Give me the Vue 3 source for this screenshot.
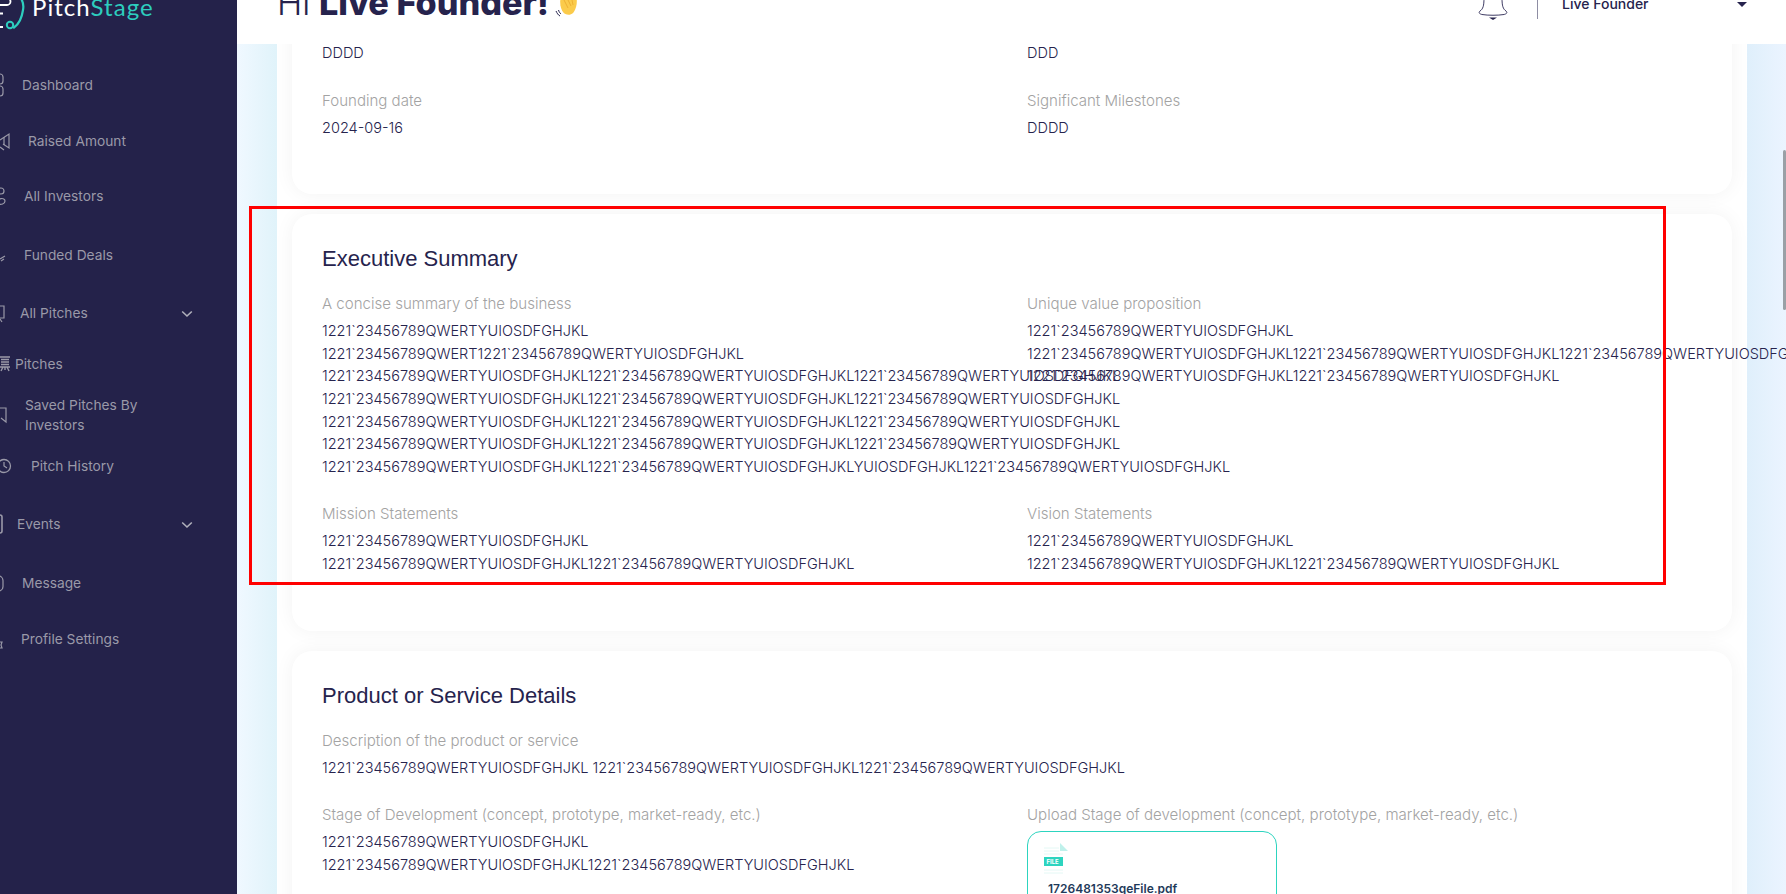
<script setup>
const navItems = [
  { label: 'Dashboard', shift: 0, top: 1, icon: 'dash', iconW: 22 },
  { label: 'Raised Amount', shift: 6, top: 15.5, icon: 'raise', iconW: 28 },
  { label: 'All Investors', shift: 2, top: 15, icon: 'people', iconW: 24 },
  { label: 'Funded Deals', shift: 2, top: 19, icon: 'deal', iconW: 24 },
  { label: 'All Pitches', shift: -2, top: 18, icon: 'board', iconW: 20, caret: true },
  { label: 'Pitches', shift: -7, top: 11, icon: 'pitch', iconW: 15 },
  { label: 'Saved Pitches By Investors', shift: 3, top: 11, icon: 'save', iconW: 25, wide: true },
  { label: 'Pitch History', shift: 9, top: 11, icon: 'clock', iconW: 31 },
  { label: 'Events', shift: -5, top: 18, icon: 'event', iconW: 17, caret: true },
  { label: 'Message', shift: 0, top: 19, icon: 'msg', iconW: 22 },
  { label: 'Profile Settings', shift: -1, top: 16, icon: 'gear', iconW: 21 }
]
const one = '1221`23456789QWERTYUIOSDFGHJKL'
const two = one + one
const three = one + one + one
</script>

<template>
  <div class="page">
    <aside class="side">
      <div class="logo">
        <svg class="logo-mark" width="30" height="32" viewBox="0 0 30 32" fill="none">
          <path d="M20 -3C23 1 24 5 23 10C22 17 19 24 14 27.500" stroke="#2dcdbe" stroke-width="2.200" stroke-linecap="round"/>
          <circle cx="10" cy="25" r="3.200" stroke="#2dcdbe" stroke-width="2"/>
          <path d="M0 5H7a3.500 3.500 0 0 0 0-7H0" stroke="#fff" stroke-width="1.800"/>
          <path d="M0 13.500h3M0 27h3" stroke="#fff" stroke-width="2"/>
        </svg>
        <span class="logo-text"><span class="logo-a">Pitch</span><span class="logo-b">Stage</span></span>
      </div>
      <nav class="nav">
        <div v-for="item in navItems" :key="item.label" class="nav-row" :style="{ marginTop: item.top + 'px' }">
          <div class="nav-icon" :style="{ width: item.iconW + 'px' }">
            <svg width="16" height="24" viewBox="0 0 16 24" fill="none" stroke="#9a99a8" stroke-width="1.200">
              <template v-if="item.icon === 'dash'">
                <rect x="-6" y="1" width="9" height="10" rx="3"/><rect x="-6" y="13" width="9" height="10" rx="3"/>
              </template>
              <template v-else-if="item.icon === 'raise'">
                <path d="M0 11L9 5V19L3 15M0 18L4 21"/><path d="M4 8V16"/>
              </template>
              <template v-else-if="item.icon === 'people'">
                <circle cx="1" cy="7" r="3"/><path d="M-3 19C-3 14 5 13 5 17C5 20 1 21 -2 20"/>
              </template>
              <template v-else-if="item.icon === 'deal'">
                <path d="M0 16L5 13M1 18L4 16"/>
              </template>
              <template v-else-if="item.icon === 'board'">
                <path d="M-3 5H4V17H-3M0 18L2 21"/>
              </template>
              <template v-else-if="item.icon === 'pitch'">
                <path d="M0 5H10M1 7.500H9M1 10H9M1 12.500H9M0 15H10M3 15L1 19M7 15L9 19M5 15V18" stroke-width="1.400"/>
              </template>
              <template v-else-if="item.icon === 'save'">
                <path d="M-2 5H6V19L1 15"/>
              </template>
              <template v-else-if="item.icon === 'clock'">
                <circle cx="4" cy="12" r="6.500" stroke-width="1.300"/><path d="M4 8V12L7 14"/>
              </template>
              <template v-else-if="item.icon === 'event'">
                <rect x="-6" y="3" width="8" height="18" rx="2" stroke-width="1.600"/>
              </template>
              <template v-else-if="item.icon === 'msg'">
                <rect x="-6" y="5" width="9" height="15" rx="4.500"/>
              </template>
              <template v-else>
                <path d="M0 15H2L1 18L2 21H0"/>
              </template>
            </svg>
          </div>
          <span class="nav-label" :class="{ 'nav-wide': item.wide }">{{ item.label }}</span>
          <svg v-if="item.caret" class="chev" width="12" height="8" viewBox="0 0 12 8" fill="none">
            <path d="M1.200 1.500L6 6L10.800 1.500" stroke="#b0b0bb" stroke-width="1.600"/>
          </svg>
        </div>
      </nav>
    </aside>

    <main class="main">
      <header class="top">
        <h1 class="hello">
          <span class="hi">Hi </span><b class="name">Live Founder!</b>
          <svg class="wave" width="22" height="16" viewBox="0 0 22 16">
            <path d="M5 -4L9 -4L20 -4C22 2 20 10 17 13C14 16 9 15 7 12C5 9 3 4 5 -4Z" fill="#fbcb4b"/>
            <path d="M8 0L12 8M12 0L15 6M16 0L17 5" stroke="#eba92f" stroke-width="0.800" fill="none"/>
            <path d="M2.500 10C3 12 4 13 5 14M0 11C1 13 2 15 4 16" stroke="#26234d" stroke-width="1" fill="none"/>
          </svg>
        </h1>
        <div class="top-right">
          <svg class="bell" width="30" height="21" viewBox="0 0 30 21" fill="none">
            <path d="M6 -2C6 6 5 9 2 11C0 13 2 14 4 14.500C10 15.500 20 15.500 26 14.500C28 14 30 13 28 11C25 9 24 6 24 -2" stroke="#3e3b63" stroke-width="1"/>
            <path d="M11 17.500H19L15 20Z" fill="#26234d"/>
          </svg>
          <span class="divider"></span>
          <span class="user">Live Founder</span>
          <span class="caret"></span>
        </div>
      </header>

      <div class="scroller">
        <div class="sheet">
          <section class="card card-first">
            <div class="grid">
              <div class="field"><div class="val">DDDD</div></div>
              <div class="field"><div class="val">DDD</div></div>
              <div class="field">
                <div class="lbl">Founding date</div>
                <div class="val">2024-09-16</div>
              </div>
              <div class="field">
                <div class="lbl">Significant Milestones</div>
                <div class="val">DDDD</div>
              </div>
            </div>
          </section>

          <section class="card">
            <h2 class="title">Executive Summary</h2>
            <div class="grid">
              <div class="field">
                <div class="lbl">A concise summary of the business</div>
                <div class="val">{{ one }}</div>
                <div class="val">1221`23456789QWERT1221`23456789QWERTYUIOSDFGHJKL</div>
                <div class="val">{{ three }}</div>
                <div class="val">{{ three }}</div>
                <div class="val">{{ three }}</div>
                <div class="val">{{ three }}</div>
                <div class="val">1221`23456789QWERTYUIOSDFGHJKL1221`23456789QWERTYUIOSDFGHJKLYUIOSDFGHJKL1221`23456789QWERTYUIOSDFGHJKL</div>
              </div>
              <div class="field">
                <div class="lbl">Unique value proposition</div>
                <div class="val">{{ one }}</div>
                <div class="val">{{ three }}</div>
                <div class="val">{{ two }}</div>
              </div>
              <div class="field">
                <div class="lbl">Mission Statements</div>
                <div class="val">{{ one }}</div>
                <div class="val">{{ two }}</div>
              </div>
              <div class="field">
                <div class="lbl">Vision Statements</div>
                <div class="val">{{ one }}</div>
                <div class="val">{{ two }}</div>
              </div>
            </div>
          </section>

          <section class="card">
            <h2 class="title">Product or Service Details</h2>
            <div class="field">
              <div class="lbl">Description of the product or service</div>
              <div class="val">1221`23456789QWERTYUIOSDFGHJKL 1221`23456789QWERTYUIOSDFGHJKL1221`23456789QWERTYUIOSDFGHJKL</div>
            </div>
            <div class="grid">
              <div class="field">
                <div class="lbl">Stage of Development (concept, prototype, market-ready, etc.)</div>
                <div class="val">{{ one }}</div>
                <div class="val">{{ two }}</div>
              </div>
              <div class="field">
                <div class="lbl">Upload Stage of development (concept, prototype, market-ready, etc.)</div>
                <div class="file">
                  <svg width="26" height="30" viewBox="0 0 26 30">
                    <path d="M16 0L24 8H16Z" fill="#bff1eb"/>
                    <path d="M0 5H15M0 8H15M0 11H19M0 27H19M0 30H19" stroke="#e4f8f5" stroke-width="1"/>
                    <rect y="14" width="19" height="9" fill="#2dd4bf"/>
                    <text x="2.500" y="21" class="file-tag">FILE</text>
                  </svg>
                  <div class="file-name">1726481353qeFile.pdf</div>
                </div>
              </div>
            </div>
          </section>
        </div>
        <span class="scroll-thumb"></span>
      </div>
    </main>
    <div class="red-box"></div>
  </div>
</template>

<style>
html, body { margin: 0; padding: 0; overflow: hidden; }
</style>

<style scoped>
.page {
  position: relative;
  display: flex;
  width: 1786px;
  height: 894px;
  overflow: hidden;
  font-family: Inter, "Liberation Sans", sans-serif;
  color: #26234d;
}
.side {
  width: 237px;
  flex: none;
  background: #24224a;
  overflow: hidden;
}
.logo {
  height: 32px;
  display: flex;
  align-items: flex-start;
  overflow: hidden;
}
.logo-mark { flex: none; margin-right: 2px; overflow: visible; }
.logo-text {
  font-family: Lato, sans-serif;
  font-weight: 400;
  font-size: 24px;
  line-height: 24px;
  letter-spacing: 1.05px;
  margin-top: -5px;
}
.logo-a { color: #fff; }
.logo-b { color: #2dcdbe; }
.nav { display: flex; flex-direction: column; padding-top: 32px; }
.nav-row {
  display: flex;
  align-items: center;
  min-height: 40px;
  position: relative;
  font-size: 13.75px;
  line-height: 20px;
  color: #9a99a8;
}
.nav-icon { flex: none; height: 24px; overflow: hidden; }
.nav-icon svg { display: block; overflow: visible; }
.nav-wide { width: 130px; }
.chev { position: absolute; left: 181px; top: 17px; }
.main {
  flex: 1;
  min-width: 0;
  display: flex;
  flex-direction: column;
}
.top {
  height: 44px;
  flex: none;
  background: #fff;
  display: flex;
  justify-content: space-between;
  align-items: flex-start;
  overflow: hidden;
  padding-left: 40px;
}
.hello {
  margin: -17px 0 0;
  font-size: 34.2px;
  line-height: 40px;
  font-weight: 400;
  white-space: nowrap;
  display: flex;
  align-items: center;
}
.hi { font-weight: 300; white-space: pre; margin-right: -1px; }
.name { font-weight: 800; }
.wave { margin: 17px 0 0 7px; flex: none; align-self: flex-start; overflow: visible; }
.top-right {
  display: flex;
  align-items: flex-start;
  width: 308px;
  flex: none;
  position: relative;
}
.bell { display: block; overflow: visible; }
.divider {
  width: 1px;
  height: 19px;
  background: #8e8da3;
  margin-left: 29px;
}
.user {
  font-size: 14px;
  line-height: 18px;
  font-weight: 500;
  margin: -5px 0 0 24px;
}
.caret {
  position: absolute;
  left: 259px;
  top: 2px;
  border: 5px solid transparent;
  border-top: 5px solid #26234d;
  border-bottom: 0;
}
.scroller {
  flex: 1;
  min-height: 0;
  position: relative;
  overflow: hidden;
  padding: 0 39px 0 40px;
  background:
    linear-gradient(90deg, #f0f8ff 0%, #e0f3fa 100%) left top / 40px 100% no-repeat,
    linear-gradient(90deg, #dfeffb 0%, #ebf4ff 100%) right top / 39px 100% no-repeat;
}
.sheet {
  background: #fff;
  padding: 0 15px;
  height: 100%;
  display: flex;
  flex-direction: column;
  gap: 20px;
}
.card {
  flex: none;
  background: #fff;
  border-radius: 20px;
  box-shadow: 0 0 20px rgba(0, 0, 0, 0.05);
  padding: 31px 30px 30px;
}
.card-first {
  margin-top: -30px;
  border-radius: 0 0 20px 20px;
  padding-top: 28px;
}
.title {
  margin: 0 0 21px;
  font-family: "Liberation Sans", Arial, sans-serif;
  font-size: 22px;
  line-height: 27px;
  font-weight: 400;
  color: #26234d;
}
.grid {
  display: grid;
  grid-template-columns: 705px 1fr;
}
.field { margin-bottom: 25px; min-width: 0; }
.lbl {
  font-size: 15.05px;
  font-weight: 350;
  line-height: 22px;
  color: #a3a3a3;
  margin-bottom: 5px;
  white-space: nowrap;
}
.val {
  font-size: 14.52px;
  font-weight: 350;
  line-height: 22.6px;
  color: #26234d;
  white-space: nowrap;
}
.file {
  width: 250px;
  height: 120px;
  box-sizing: border-box;
  border: 1px solid #2dd4bf;
  border-radius: 14px;
  padding: 11px 16px;
}
.file svg { display: block; overflow: visible; }
.file-tag { font-family: Inter, sans-serif; font-size: 6px; font-weight: 700; fill: #fff; }
.file-name {
  margin: 8px 0 0 4px;
  font-size: 12px;
  font-weight: 600;
  color: #1f3a5a;
  white-space: nowrap;
}
.scroll-thumb {
  position: absolute;
  right: 0;
  top: 106px;
  width: 3px;
  height: 160px;
  background: #9aa0a6;
  border-radius: 2px;
}
.red-box {
  position: absolute;
  left: 249px;
  top: 206px;
  width: 1411px;
  height: 373px;
  border: 3px solid #f00;
  pointer-events: none;
}
</style>
